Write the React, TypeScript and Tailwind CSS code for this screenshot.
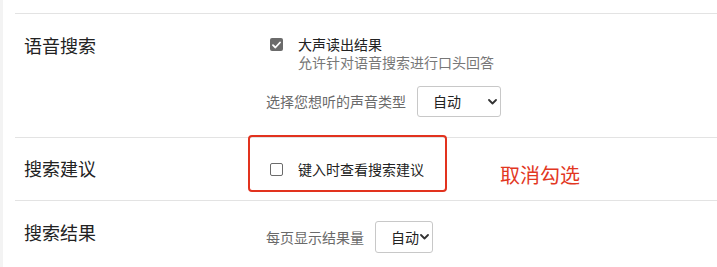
import React from "react";

const font = { fontFamily: '"Noto Sans CJK SC", "Noto Sans", sans-serif' };

function Chevron() {
  return (
    <svg width="9" height="6" viewBox="0 0 9 6" className="shrink-0">
      <path d="M1 1 L4.5 4.5 L8 1" fill="none" stroke="#333" strokeWidth="1.8" strokeLinecap="round" strokeLinejoin="round" />
    </svg>
  );
}

export default function App() {
  return (
    <div className="w-[717px] h-[267px] bg-white overflow-hidden flex" style={font}>
      <div className="w-[3px] shrink-0 bg-[#f3f3f3]" />
      <div className="flex-1 pl-[12px] pt-[13px]">
        {/* Section 1 */}
        <div className="flex border-t border-[#e3e3e3] h-[124px]">
          <div className="w-[251px] shrink-0 pl-[9px] pt-[18px] text-[18px] leading-[26px] text-[#222]">语音搜索</div>
          <div className="flex flex-col pt-[21px]">
            <div className="flex items-start pl-[4px] gap-[15px]">
              <div className="mt-[3px] w-[13px] h-[13px] rounded-[2px] bg-[#6b6b6b] flex items-center justify-center">
                <svg width="9" height="8" viewBox="0 0 9 8">
                  <path d="M1 4.2 L3.4 6.5 L8 1.5" fill="none" stroke="#fff" strokeWidth="1.8" strokeLinecap="round" strokeLinejoin="round" />
                </svg>
              </div>
              <div className="flex flex-col text-[14px] leading-[18px]">
                <span className="text-[#222]">大声读出结果</span>
                <span className="text-[#777]">允许针对语音搜索进行口头回答</span>
              </div>
            </div>
            <div className="flex items-center gap-[11px] mt-[15px]">
              <span className="text-[14px] text-[#6a6a6a]">选择您想听的声音类型</span>
              <div className="w-[84px] h-[31px] border border-[#c8c8c8] rounded-[3px] flex items-center justify-between pl-[15px] pr-[3px]">
                <span className="text-[14px] text-[#222]">自动</span>
                <Chevron />
              </div>
            </div>
          </div>
        </div>
        {/* Section 2 */}
        <div className="relative flex border-t border-[#e3e3e3] h-[63px]">
          <div className="w-[251px] shrink-0 pl-[9px] pt-[17px] text-[18px] leading-[26px] text-[#222]">搜索建议</div>
          <div className="w-[234px] shrink-0 flex items-center pl-[4px] gap-[15px] pt-[21px] h-[41px] self-start">
            <div className="w-[13px] h-[13px] rounded-[2px] border border-[#6b6b6b] bg-white" />
            <span className="text-[14px] leading-[20px] text-[#222]">键入时查看搜索建议</span>
          </div>
          <div className="pt-[23px] text-[20px] leading-[28px] text-[#e2371f]">取消勾选</div>
          <div className="absolute left-[233px] top-[-3px] w-[199px] h-[57px] border-2 border-[#e2321e] rounded-[4px]" />
        </div>
        {/* Section 3 */}
        <div className="flex border-t border-[#e3e3e3] h-[67px]">
          <div className="w-[251px] shrink-0 pl-[9px] pt-[18px] text-[18px] leading-[26px] text-[#222]">搜索结果</div>
          <div className="flex items-center gap-[11px] pt-[20px] self-start">
            <span className="text-[14px] text-[#6a6a6a]">每页显示结果量</span>
            <div className="w-[58px] h-[32px] border border-[#c8c8c8] rounded-[3px] flex items-center justify-between pl-[15px] pr-[3px]">
              <span className="text-[14px] text-[#222]">自动</span>
              <Chevron />
            </div>
          </div>
        </div>
      </div>
    </div>
  );
}
